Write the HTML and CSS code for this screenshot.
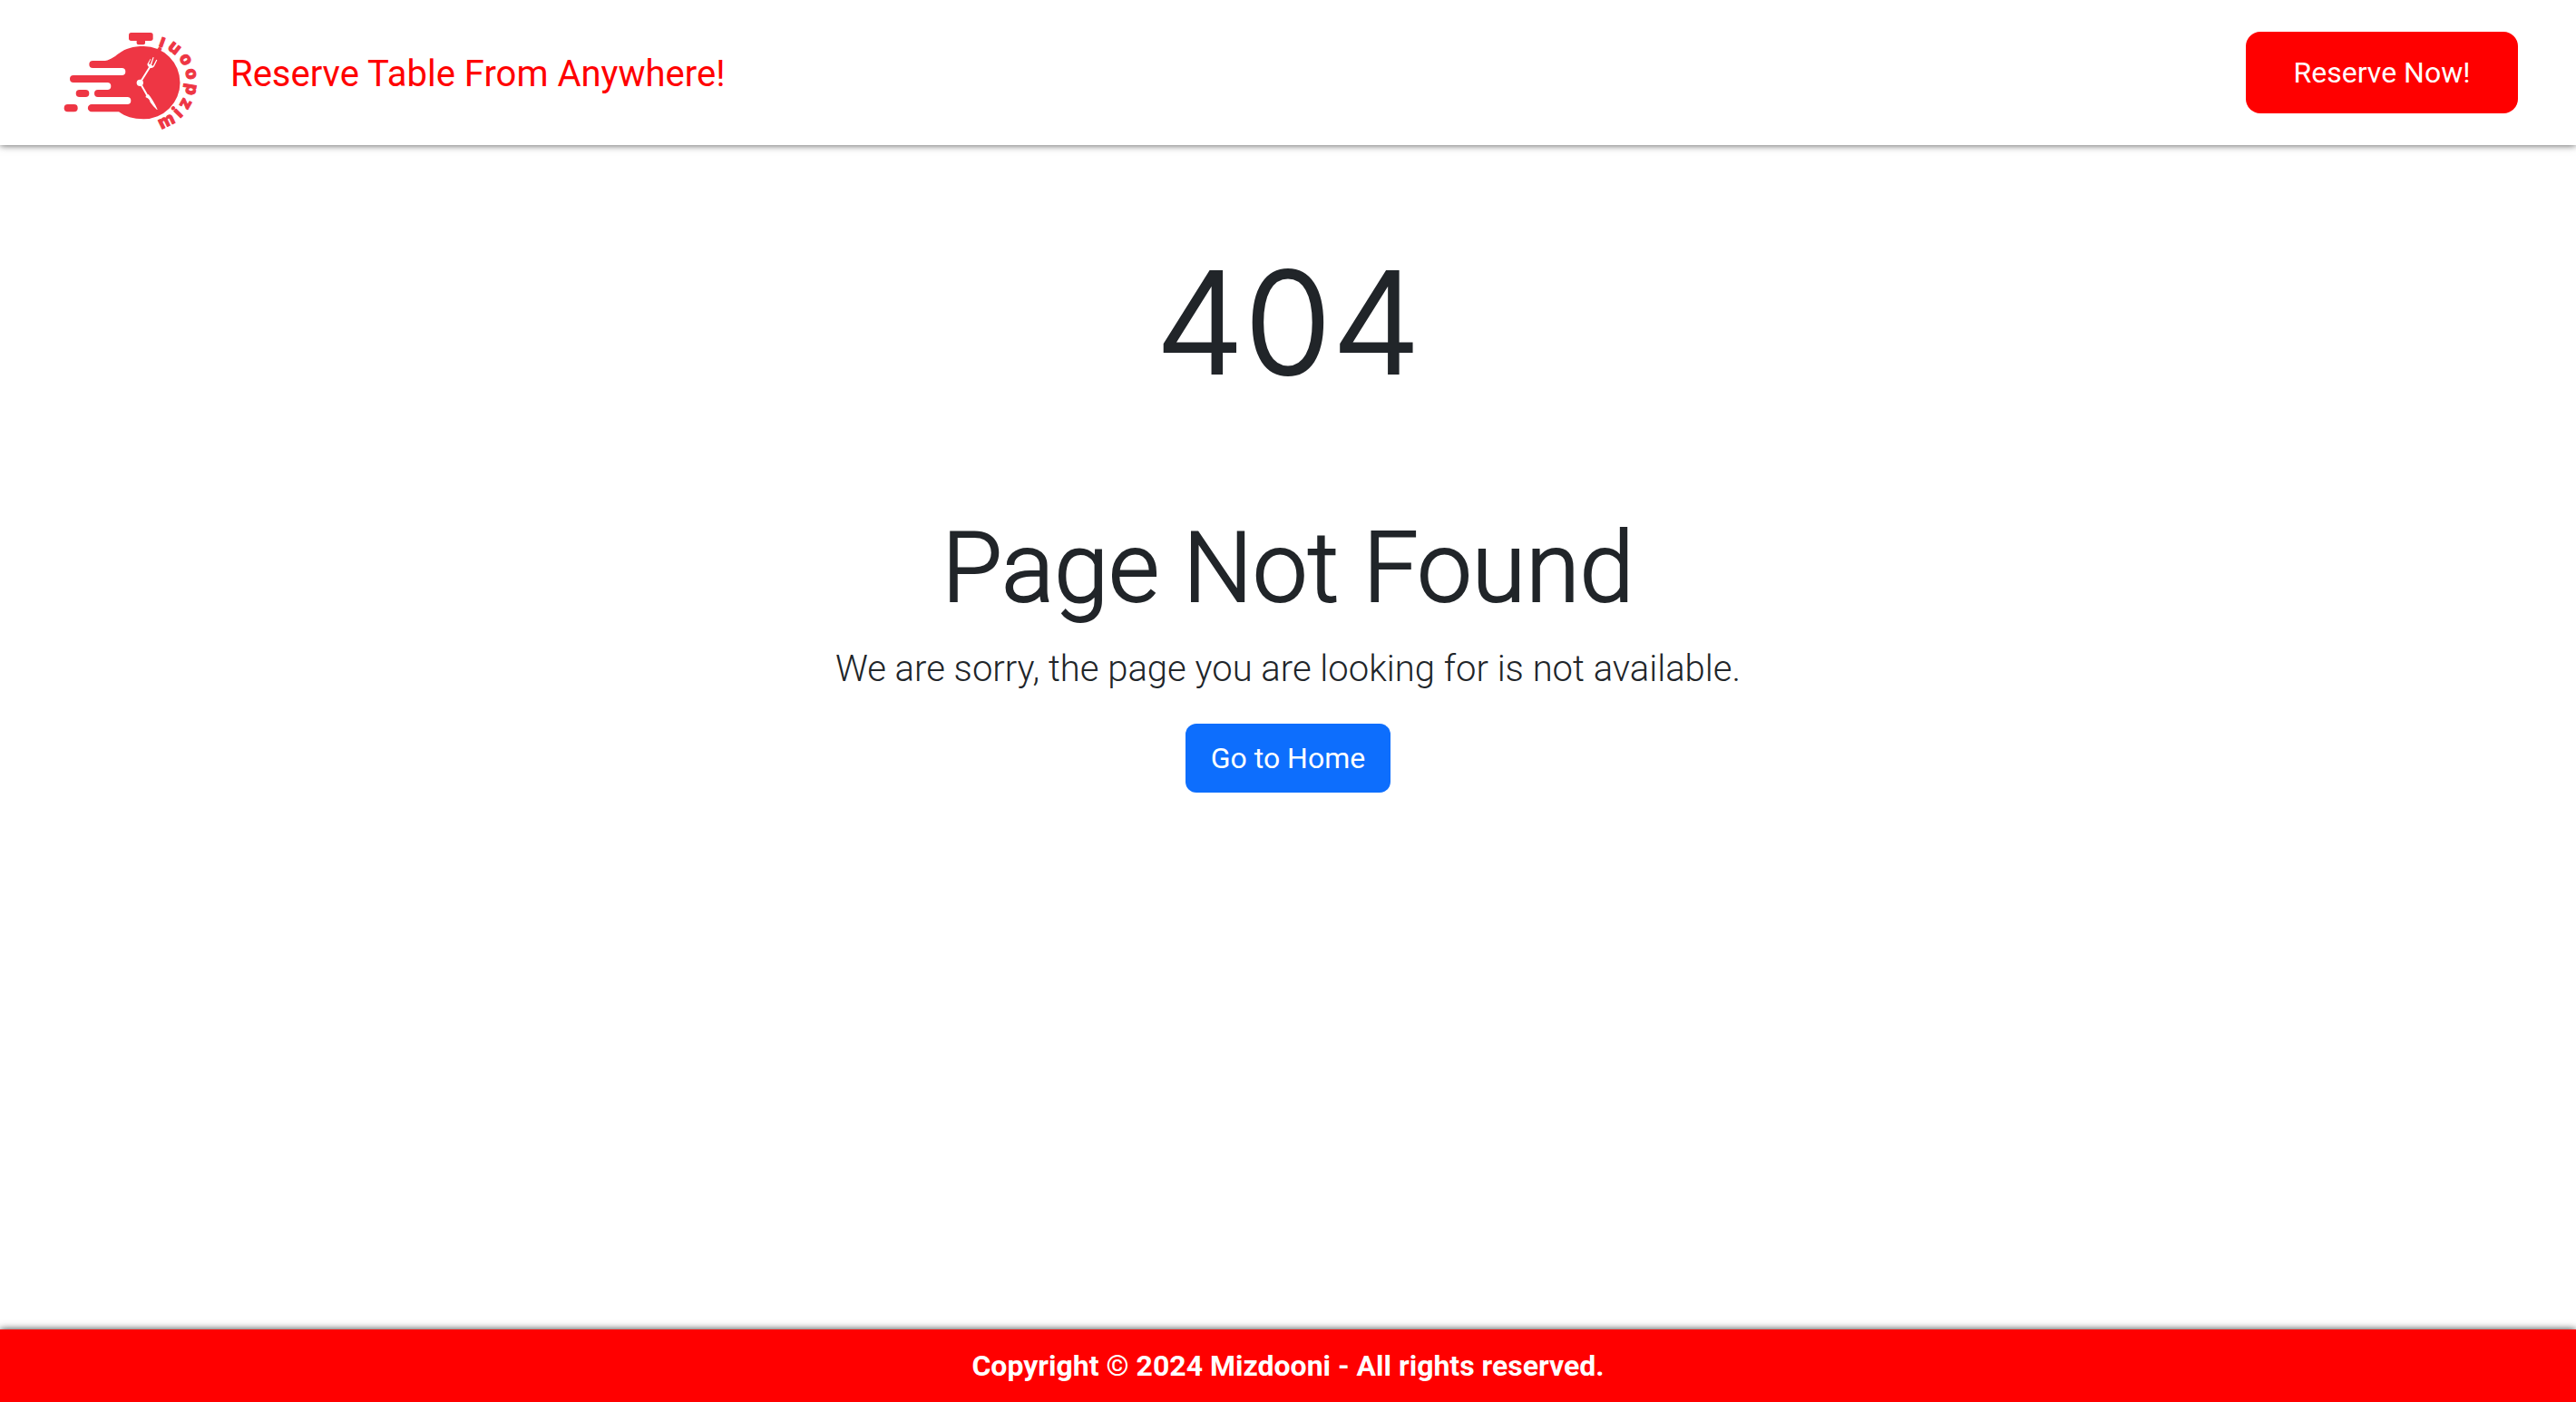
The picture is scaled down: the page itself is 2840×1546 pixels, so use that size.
FILE: index.html
```html
<!DOCTYPE html>
<html lang="en">
<head>
  <meta charset="utf-8">
  <meta name="viewport" content="width=device-width, initial-scale=1">
  <title>Mizdooni - Page Not Found</title>
  <link rel="stylesheet" href="styles.css">
</head>
<body>
  <header class="site-header">
    <div class="brand">
      <a class="brand-link" href="#" aria-label="Mizdooni home">
        <svg class="logo" viewBox="30 9 510 390" aria-hidden="true">
          <g class="logo-shape">
            <rect x="276" y="48" width="80" height="27" rx="8"/>
            <path d="M302 70h28v12q0 6-6 6h-16q-6 0-6-6z"/>
            <path d="M157 141H190C212 141 226 129 244 116C265 101 290 93 325 93A120.500 120.500 0 0 1 325 334C290 334 264 326 243 310H153A12.500 12.500 0 0 1 153 285H271A11.500 11.500 0 0 0 271 261H174A12 12 0 0 1 174 237H205A11.500 11.500 0 0 0 205 213H93A12 12 0 0 1 93 189H253A12 12 0 0 0 253 165H157A12 12 0 0 1 157 141Z"/>
            <rect x="101" y="237" width="44" height="24" rx="12"/>
            <rect x="62" y="285" width="45" height="25" rx="12"/>
          </g>
          <g class="logo-hands">
            <circle cx="313" cy="214" r="11"/>
            <path class="handle" d="M313 214L346 161"/>
            <path d="M337 152L347 135L349 136L342 151L347 153L356 129L359 130L351 155L356 158L367 137L370 139L360 160Q354 167 346 164Q337 160 337 152Z"/>
            <path class="handle" d="M313 214L337 256"/>
            <path d="M332 257L341 252Q356 270 371 302L369 303Q356 291 347 278Q343 265 332 262Z"/>
          </g>
          <g class="logo-name">
            <text x="338" y="373" transform="rotate(-26 338 213)">m</text>
            <text x="338" y="373" transform="rotate(-45 338 213)">i</text>
            <text x="338" y="373" transform="rotate(-61 338 213)">z</text>
            <text x="338" y="374" transform="rotate(-81 338 213)">d</text>
            <text x="338" y="375" transform="rotate(-101 338 213)">o</text>
            <text x="338" y="375" transform="rotate(-121 338 213)">o</text>
            <text x="338" y="373" transform="rotate(-142 338 213)">n</text>
            <text x="338" y="371" transform="rotate(-160 338 213)">i</text>
          </g>
        </svg>
      </a>
      <span class="tagline">Reserve Table From Anywhere!</span>
    </div>
    <button class="button reserve-button" type="button">Reserve Now!</button>
  </header>

  <main class="not-found">
    <h1 class="code">404</h1>
    <h2 class="title">Page Not Found</h2>
    <p class="message">We are sorry, the page you are looking for is not available.</p>
    <a class="button home-button" href="#">Go to Home</a>
  </main>

  <footer class="site-footer">Copyright © 2024 Mizdooni - All rights reserved.</footer>
</body>
</html>
```
FILE: styles.css
```css
* {
  box-sizing: border-box;
}

body {
  display: flex;
  flex-direction: column;
  min-height: 100vh;
  margin: 0;
  background: #fff;
  color: #212529;
  font-family: Roboto, "Liberation Sans", sans-serif;
}

.site-header {
  display: flex;
  align-items: center;
  justify-content: space-between;
  min-height: 160px;
  padding: 0 64px 0 60px;
  box-shadow: 0 0 8px rgba(0, 0, 0, 0.7);
}

.brand {
  display: flex;
  align-items: center;
  gap: 24px;
  padding-top: 4px;
}

.brand-link {
  display: flex;
  padding-top: 12px;
}

.logo {
  width: 170px;
  height: 130px;
  overflow: visible;
}

.logo-shape {
  fill: #ee3644;
}

.logo-hands {
  fill: #fff;
}

.handle {
  stroke: #fff;
  stroke-width: 6;
}

.logo-name {
  fill: #ee3644;
  stroke: #ee3644;
  stroke-width: 3;
  stroke-linejoin: round;
  font-family: Inter, sans-serif;
  font-size: 58px;
  font-weight: 800;
  text-anchor: middle;
}

.tagline {
  color: #f00;
  font-size: 40px;
  line-height: 60px;
}

.button {
  border: 0;
  color: #fff;
  font-family: inherit;
  font-size: 32px;
  line-height: 48px;
  text-align: center;
  text-decoration: none;
  cursor: pointer;
}

.reserve-button {
  min-width: 300px;
  padding: 21px 32px;
  border-radius: 16px;
  background: #f00;
}

.not-found {
  display: flex;
  flex: 1;
  flex-direction: column;
  align-items: center;
  padding: 100px 32px 64px;
  text-align: center;
}

.code {
  margin: 0 0 108px;
  font-family: Inter, sans-serif;
  font-size: 156px;
  font-weight: 300;
  line-height: 192px;
  -webkit-text-stroke: 2px currentColor;
}

.title {
  margin: 0 0 16px;
  font-size: 108px;
  font-weight: 300;
  line-height: 132px;
  -webkit-text-stroke: 2px currentColor;
}

.message {
  margin: 0 0 30px;
  font-size: 40px;
  font-weight: 300;
  line-height: 60px;
}

.home-button {
  min-width: 226px;
  padding: 14px 24px;
  border-radius: 12px;
  background: #0d6efd;
}

.site-footer {
  padding: 16px;
  background: #f00;
  box-shadow: 0 0 8px rgba(0, 0, 0, 0.8);
  color: #fff;
  font-size: 32px;
  font-weight: 700;
  line-height: 48px;
  text-align: center;
}
```
